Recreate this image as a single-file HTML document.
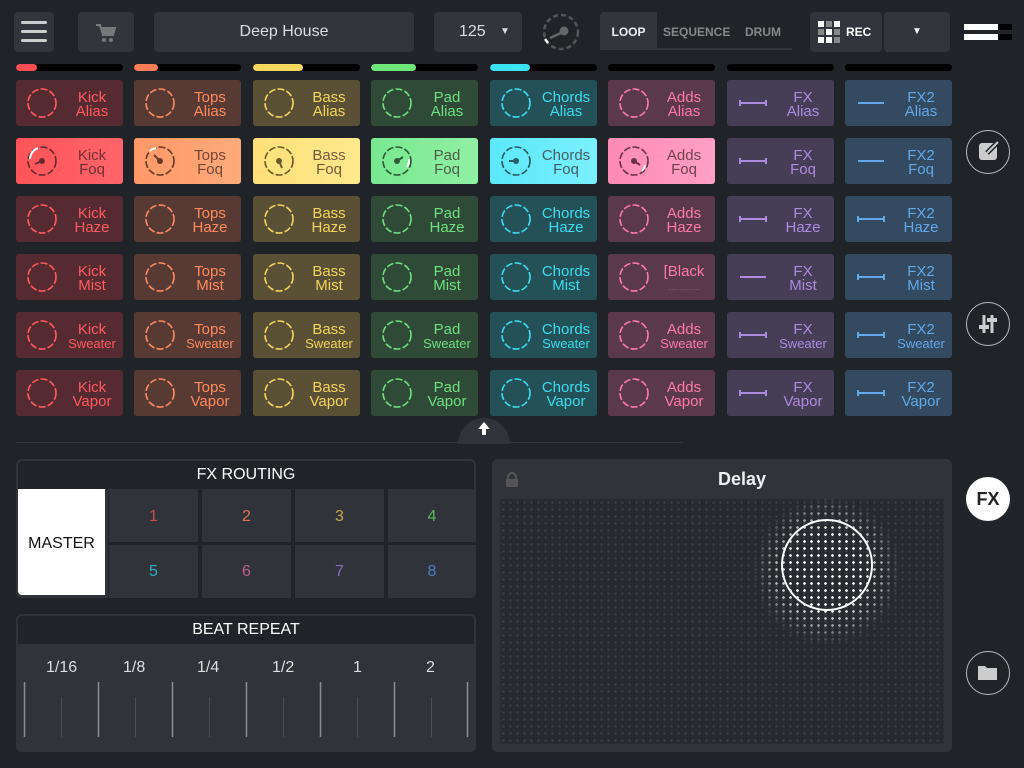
<!DOCTYPE html>
<html><head><meta charset="utf-8"><style>
*{box-sizing:border-box;margin:0;padding:0}
body{width:1024px;height:768px;background:#202327;font-family:"Liberation Sans",sans-serif;position:relative;overflow:hidden;color:#fff}
.a{position:absolute}
.btn{position:absolute;background:#32363c;border-radius:4px}
.p{position:absolute;width:107px;height:46px;border-radius:3px}
.p svg{position:absolute;left:10px;top:7px}
.t{position:absolute;left:44px;width:64px;top:11px;text-align:center;font-size:15px;line-height:14px}
.s{font-size:13px}
.bar{position:absolute;top:64px;height:7px;width:107px;background:#000;border-radius:4px;overflow:hidden}
.bar i{display:block;height:7px;border-radius:4px}
.c1 .t{color:#ff5a5f}.c1{background:#552a31}
.c2 .t{color:#ff8a5c}.c2{background:#573a33}
.c3 .t{color:#f5d45c}.c3{background:#5a5036}
.c4 .t{color:#6ee07e}.c4{background:#2f4a37}
.c5 .t{color:#3ddcee}.c5{background:#245058}
.c6 .t{color:#ff78a8}.c6{background:#5a3a4a}
.c7 .t{color:#ae8ae0}.c7{background:#463d56}
.c8 .t{color:#62a8ea}.c8{background:#334a60}
.f .t{color:rgba(50,30,30,.7)}
.cb{position:absolute;width:44px;height:44px;border-radius:50%;border:1.5px solid #bbb;left:966px}
</style></head><body>
<div class="btn" style="left:14px;top:12px;width:40px;height:40px"><div class="a" style="left:7px;top:9px;width:26px;height:3px;background:#ccc;border-radius:2px;box-shadow:0 9px 0 #ccc,0 18px 0 #ccc"></div></div>
<div class="btn" style="left:78px;top:12px;width:56px;height:40px"><svg class="a" style="left:16px;top:10px" width="24" height="22"><path d="M2 3h4l3 10h10l2-7H7" fill="#777" stroke="#777" stroke-width="2"/><circle cx="10" cy="18" r="2" fill="#777"/><circle cx="17" cy="18" r="2" fill="#777"/></svg></div>
<div class="btn" style="left:154px;top:12px;width:260px;height:40px;text-align:center;line-height:40px;font-size:16px;color:#ddd">Deep House</div>
<div class="btn" style="left:434px;top:12px;width:88px;height:40px;line-height:40px;font-size:16px;color:#ddd"><span class="a" style="left:25px">125</span><span class="a" style="left:66px;font-size:10px">▼</span></div>
<svg class="a" style="left:542px;top:13px" width="38" height="38"><circle cx="19" cy="19" r="17" fill="none" stroke="#555" stroke-width="2.5" stroke-dasharray="5 3"/><circle cx="22" cy="18" r="4.5" fill="#666"/><path d="M21 19L8 25" stroke="#666" stroke-width="2.5"/><path d="M3 26L6 30" stroke="#fff" stroke-width="2.5"/></svg>
<div class="a" style="left:600px;top:12px;width:192px;height:38px;border-bottom:2px solid #32363c"></div>
<div class="btn" style="left:600px;top:12px;width:57px;height:38px;border-radius:4px 0 0 0;font-size:12px;font-weight:bold;line-height:40px;text-align:center;color:#eee">LOOP</div>
<div class="a" style="left:663px;top:12px;line-height:40px;font-size:12px;font-weight:bold;color:#888">SEQUENCE</div>
<div class="a" style="left:745px;top:12px;line-height:40px;font-size:12px;font-weight:bold;color:#888">DRUM</div>
<div class="btn" style="left:810px;top:12px;width:72px;height:40px"><svg class="a" style="left:8px;top:9px" width="22" height="22"><g fill="#fff"><rect x="0" y="0" width="6" height="6"/><rect x="0" y="8" width="6" height="6" fill="#888"/><rect x="0" y="16" width="6" height="6"/><rect x="8" y="0" width="6" height="6" fill="#888"/><rect x="8" y="8" width="6" height="6"/><rect x="8" y="16" width="6" height="6"/><rect x="16" y="0" width="6" height="6"/><rect x="16" y="8" width="6" height="6" fill="#888"/><rect x="16" y="16" width="6" height="6" fill="#888"/></g></svg><span class="a" style="left:36px;top:0;line-height:40px;font-size:12px;font-weight:bold">REC</span></div>
<div class="btn" style="left:884px;top:12px;width:66px;height:40px;text-align:center;line-height:40px;font-size:10px">▼</div>
<div class="a" style="left:964px;top:24px;width:34px;height:6px;background:#fff"></div><div class="a" style="left:998px;top:24px;width:14px;height:6px;background:#000"></div>
<div class="a" style="left:964px;top:34px;width:34px;height:6px;background:#fff"></div><div class="a" style="left:998px;top:34px;width:14px;height:6px;background:#000"></div>
<div class="bar" style="left:16px"><i style="width:21px;background:#ff4d55"></i></div>
<div class="bar" style="left:134px"><i style="width:24px;background:#ff7e58"></i></div>
<div class="bar" style="left:253px"><i style="width:50px;background:#ffd85e"></i></div>
<div class="bar" style="left:371px"><i style="width:45px;background:#6ee67a"></i></div>
<div class="bar" style="left:490px"><i style="width:40px;background:#3ae3f5"></i></div>
<div class="bar" style="left:608px"></div><div class="bar" style="left:727px"></div><div class="bar" style="left:845px"></div>
<svg width="0" height="0" style="position:absolute"><defs>
<symbol id="cir" viewBox="0 0 32 32"><circle cx="16" cy="16" r="14" fill="none" stroke="currentColor" stroke-width="1.6" stroke-dasharray="7 2.2"/></symbol>
<symbol id="ln" viewBox="0 0 32 32"><path d="M3 16h26M3 13v6M29 13v6" stroke="currentColor" stroke-width="2" fill="none"/></symbol>
<symbol id="ln2" viewBox="0 0 32 32"><path d="M3 16h26" stroke="currentColor" stroke-width="2" fill="none"/></symbol>
</defs></svg>
<div class="p c1" style="left:16px;top:80px"><svg width="32" height="32" style="color:#ff5a5f"><use href="#cir"/></svg><div class="t">Kick<br>Alias</div></div>
<div class="p c2" style="left:134px;top:80px"><svg width="32" height="32" style="color:#ff8a5c"><use href="#cir"/></svg><div class="t">Tops<br>Alias</div></div>
<div class="p c3" style="left:253px;top:80px"><svg width="32" height="32" style="color:#f5d45c"><use href="#cir"/></svg><div class="t">Bass<br>Alias</div></div>
<div class="p c4" style="left:371px;top:80px"><svg width="32" height="32" style="color:#6ee07e"><use href="#cir"/></svg><div class="t">Pad<br>Alias</div></div>
<div class="p c5" style="left:490px;top:80px"><svg width="32" height="32" style="color:#3ddcee"><use href="#cir"/></svg><div class="t">Chords<br>Alias</div></div>
<div class="p c6" style="left:608px;top:80px"><svg width="32" height="32" style="color:#ff78a8"><use href="#cir"/></svg><div class="t">Adds<br>Alias</div></div>
<div class="p c7" style="left:727px;top:80px"><svg width="32" height="32" style="color:#ae8ae0"><use href="#ln"/></svg><div class="t">FX<br>Alias</div></div>
<div class="p c8" style="left:845px;top:80px"><svg width="32" height="32" style="color:#62a8ea"><use href="#ln2"/></svg><div class="t">FX2<br>Alias</div></div>

<div class="p c1 f" style="left:16px;top:138px;background:linear-gradient(90deg,#ff5459,#ff646a)"><svg width="32" height="32" style="color:#6a2a2e"><use href="#cir"/><circle cx="16" cy="16" r="3" fill="#6a2a2e"/><path d="M16 16L9 19" stroke="#6a2a2e" stroke-width="2"/><path d="M4 14A12 12 0 0 1 12 3" stroke="#fff" stroke-width="2" fill="none"/></svg><div class="t">Kick<br>Foq</div></div>
<div class="p c2 f" style="left:134px;top:138px;background:linear-gradient(90deg,#ff9868,#ffaa7a)"><svg width="32" height="32" style="color:#6a3a28"><use href="#cir"/><circle cx="16" cy="16" r="3" fill="#6a3a28"/><path d="M16 16L10 10" stroke="#6a3a28" stroke-width="2"/><path d="M6 6A12 12 0 0 1 12 3" stroke="#fff" stroke-width="2" fill="none"/></svg><div class="t">Tops<br>Foq</div></div>
<div class="p c3 f" style="left:253px;top:138px;background:linear-gradient(90deg,#ffe07a,#ffe88c)"><svg width="32" height="32" style="color:#6a5a2a"><use href="#cir"/><circle cx="16" cy="16" r="3" fill="#6a5a2a"/><path d="M16 16L19 23" stroke="#6a5a2a" stroke-width="2"/></svg><div class="t">Bass<br>Foq</div></div>
<div class="p c4 f" style="left:371px;top:138px;background:linear-gradient(90deg,#78e890,#90f0a4)"><svg width="32" height="32" style="color:#2e5a38"><use href="#cir"/><circle cx="16" cy="16" r="3" fill="#2e5a38"/><path d="M16 16L22 12" stroke="#2e5a38" stroke-width="2"/><path d="M28 14A12 12 0 0 1 26 22" stroke="#fff" stroke-width="2" fill="none"/></svg><div class="t">Pad<br>Foq</div></div>
<div class="p c5 f" style="left:490px;top:138px;background:linear-gradient(90deg,#5ae8f8,#7af0ff)"><svg width="32" height="32" style="color:#2a5a62"><use href="#cir"/><circle cx="16" cy="16" r="3" fill="#2a5a62"/><path d="M16 16L9 16" stroke="#2a5a62" stroke-width="2"/></svg><div class="t">Chords<br>Foq</div></div>
<div class="p c6 f" style="left:608px;top:138px;background:linear-gradient(90deg,#ff8ab4,#ffa0c4)"><svg width="32" height="32" style="color:#6a3448"><use href="#cir"/><circle cx="16" cy="16" r="3" fill="#6a3448"/><path d="M16 16L22 20" stroke="#6a3448" stroke-width="2"/><path d="M27 20A12 12 0 0 1 24 26" stroke="#fff" stroke-width="2" fill="none"/></svg><div class="t">Adds<br>Foq</div></div>
<div class="p c7" style="left:727px;top:138px"><svg width="32" height="32" style="color:#ae8ae0"><use href="#ln"/></svg><div class="t">FX<br>Foq</div></div>
<div class="p c8" style="left:845px;top:138px"><svg width="32" height="32" style="color:#62a8ea"><use href="#ln2"/></svg><div class="t">FX2<br>Foq</div></div>

<div class="p c1" style="left:16px;top:196px"><svg width="32" height="32" style="color:#ff5a5f"><use href="#cir"/></svg><div class="t">Kick<br>Haze</div></div>
<div class="p c2" style="left:134px;top:196px"><svg width="32" height="32" style="color:#ff8a5c"><use href="#cir"/></svg><div class="t">Tops<br>Haze</div></div>
<div class="p c3" style="left:253px;top:196px"><svg width="32" height="32" style="color:#f5d45c"><use href="#cir"/></svg><div class="t">Bass<br>Haze</div></div>
<div class="p c4" style="left:371px;top:196px"><svg width="32" height="32" style="color:#6ee07e"><use href="#cir"/></svg><div class="t">Pad<br>Haze</div></div>
<div class="p c5" style="left:490px;top:196px"><svg width="32" height="32" style="color:#3ddcee"><use href="#cir"/></svg><div class="t">Chords<br>Haze</div></div>
<div class="p c6" style="left:608px;top:196px"><svg width="32" height="32" style="color:#ff78a8"><use href="#cir"/></svg><div class="t">Adds<br>Haze</div></div>
<div class="p c7" style="left:727px;top:196px"><svg width="32" height="32" style="color:#ae8ae0"><use href="#ln"/></svg><div class="t">FX<br>Haze</div></div>
<div class="p c8" style="left:845px;top:196px"><svg width="32" height="32" style="color:#62a8ea"><use href="#ln"/></svg><div class="t">FX2<br>Haze</div></div>

<div class="p c1" style="left:16px;top:254px"><svg width="32" height="32" style="color:#ff5a5f"><use href="#cir"/></svg><div class="t">Kick<br>Mist</div></div>
<div class="p c2" style="left:134px;top:254px"><svg width="32" height="32" style="color:#ff8a5c"><use href="#cir"/></svg><div class="t">Tops<br>Mist</div></div>
<div class="p c3" style="left:253px;top:254px"><svg width="32" height="32" style="color:#f5d45c"><use href="#cir"/></svg><div class="t">Bass<br>Mist</div></div>
<div class="p c4" style="left:371px;top:254px"><svg width="32" height="32" style="color:#6ee07e"><use href="#cir"/></svg><div class="t">Pad<br>Mist</div></div>
<div class="p c5" style="left:490px;top:254px"><svg width="32" height="32" style="color:#3ddcee"><use href="#cir"/></svg><div class="t">Chords<br>Mist</div></div>
<div class="p c6" style="left:608px;top:254px"><svg width="32" height="32" style="color:#ff78a8"><use href="#cir"/></svg><div class="t">[Black<br><span style="font-size:3px;line-height:3px">--- ------ ------------- -------</span></div></div>
<div class="p c7" style="left:727px;top:254px"><svg width="32" height="32" style="color:#ae8ae0"><use href="#ln2"/></svg><div class="t">FX<br>Mist</div></div>
<div class="p c8" style="left:845px;top:254px"><svg width="32" height="32" style="color:#62a8ea"><use href="#ln"/></svg><div class="t">FX2<br>Mist</div></div>

<div class="p c1" style="left:16px;top:312px"><svg width="32" height="32" style="color:#ff5a5f"><use href="#cir"/></svg><div class="t">Kick<br><span class="s">Sweater</span></div></div>
<div class="p c2" style="left:134px;top:312px"><svg width="32" height="32" style="color:#ff8a5c"><use href="#cir"/></svg><div class="t">Tops<br><span class="s">Sweater</span></div></div>
<div class="p c3" style="left:253px;top:312px"><svg width="32" height="32" style="color:#f5d45c"><use href="#cir"/></svg><div class="t">Bass<br><span class="s">Sweater</span></div></div>
<div class="p c4" style="left:371px;top:312px"><svg width="32" height="32" style="color:#6ee07e"><use href="#cir"/></svg><div class="t">Pad<br><span class="s">Sweater</span></div></div>
<div class="p c5" style="left:490px;top:312px"><svg width="32" height="32" style="color:#3ddcee"><use href="#cir"/></svg><div class="t">Chords<br><span class="s">Sweater</span></div></div>
<div class="p c6" style="left:608px;top:312px"><svg width="32" height="32" style="color:#ff78a8"><use href="#cir"/></svg><div class="t">Adds<br><span class="s">Sweater</span></div></div>
<div class="p c7" style="left:727px;top:312px"><svg width="32" height="32" style="color:#ae8ae0"><use href="#ln"/></svg><div class="t">FX<br><span class="s">Sweater</span></div></div>
<div class="p c8" style="left:845px;top:312px"><svg width="32" height="32" style="color:#62a8ea"><use href="#ln"/></svg><div class="t">FX2<br><span class="s">Sweater</span></div></div>

<div class="p c1" style="left:16px;top:370px"><svg width="32" height="32" style="color:#ff5a5f"><use href="#cir"/></svg><div class="t">Kick<br>Vapor</div></div>
<div class="p c2" style="left:134px;top:370px"><svg width="32" height="32" style="color:#ff8a5c"><use href="#cir"/></svg><div class="t">Tops<br>Vapor</div></div>
<div class="p c3" style="left:253px;top:370px"><svg width="32" height="32" style="color:#f5d45c"><use href="#cir"/></svg><div class="t">Bass<br>Vapor</div></div>
<div class="p c4" style="left:371px;top:370px"><svg width="32" height="32" style="color:#6ee07e"><use href="#cir"/></svg><div class="t">Pad<br>Vapor</div></div>
<div class="p c5" style="left:490px;top:370px"><svg width="32" height="32" style="color:#3ddcee"><use href="#cir"/></svg><div class="t">Chords<br>Vapor</div></div>
<div class="p c6" style="left:608px;top:370px"><svg width="32" height="32" style="color:#ff78a8"><use href="#cir"/></svg><div class="t">Adds<br>Vapor</div></div>
<div class="p c7" style="left:727px;top:370px"><svg width="32" height="32" style="color:#ae8ae0"><use href="#ln"/></svg><div class="t">FX<br>Vapor</div></div>
<div class="p c8" style="left:845px;top:370px"><svg width="32" height="32" style="color:#62a8ea"><use href="#ln"/></svg><div class="t">FX2<br>Vapor</div></div>

<div class="cb" style="top:130px"><div class="a" style="left:12px;top:12px;width:18px;height:17px;background:#ccc;border-radius:3px"></div><svg class="a" style="left:16px;top:8px" width="20" height="20"><path d="M4 14L15 3" stroke="#202327" stroke-width="5"/><path d="M4 14L15 3" stroke="#ccc" stroke-width="2"/></svg></div>
<div class="cb" style="top:302px"><svg class="a" style="left:10px;top:9px" width="22" height="24"><g stroke="#ccc" stroke-width="3"><path d="M7 3v18M15 3v18"/></g><rect x="2" y="13" width="10" height="4" fill="#ccc"/><rect x="10" y="6" width="10" height="4" fill="#ccc"/></svg></div>
<div class="a" style="left:966px;top:477px;width:44px;height:44px;border-radius:50%;background:#fff;color:#222;font-size:18px;font-weight:bold;text-align:center;line-height:44px">FX</div>
<div class="cb" style="top:651px"><svg class="a" style="left:11px;top:12px" width="20" height="17"><path d="M0 2h7l2 2h10v12H0z" fill="#ccc"/></svg></div>

<div class="a" style="left:16px;top:442px;width:667px;height:1px;background:#33373c"></div>
<div class="a" style="left:458px;top:418px;width:52px;height:26px;border-radius:26px 26px 0 0;background:#30343a"></div>
<svg class="a" style="left:476px;top:421px" width="16" height="16"><path d="M8 1L2 8h4v6h4V8h4z" fill="#fff"/></svg>

<div class="a" style="left:16px;top:459px;width:460px;height:139px;background:#30343a;border-radius:6px;overflow:hidden">
<div class="a" style="left:2px;top:2px;width:456px;height:28px;background:#202327;border-radius:4px 4px 0 0;text-align:center;line-height:28px;font-size:16px">FX ROUTING</div>
<div class="a" style="left:2px;top:30px;width:87px;height:106px;background:#fff;color:#111;text-align:center;line-height:110px;font-size:16px;border-radius:0 0 0 4px">MASTER</div>
<div class="a" style="left:92px;top:30px;width:368px;height:109px;background:#202327"></div>
<div class="a" style="left:93px;top:30px;width:89px;height:53px;background:#30343a;color:#d04a4c;text-align:center;line-height:55px;font-size:16px">1</div>
<div class="a" style="left:186px;top:30px;width:89px;height:53px;background:#30343a;color:#e07050;text-align:center;line-height:55px;font-size:16px">2</div>
<div class="a" style="left:279px;top:30px;width:89px;height:53px;background:#30343a;color:#c8a848;text-align:center;line-height:55px;font-size:16px">3</div>
<div class="a" style="left:372px;top:30px;width:88px;height:53px;background:#30343a;color:#5ab85a;text-align:center;line-height:55px;font-size:16px">4</div>
<div class="a" style="left:93px;top:86px;width:89px;height:53px;background:#30343a;color:#30b0c8;text-align:center;line-height:53px;font-size:16px">5</div>
<div class="a" style="left:186px;top:86px;width:89px;height:53px;background:#30343a;color:#c05a8a;text-align:center;line-height:53px;font-size:16px">6</div>
<div class="a" style="left:279px;top:86px;width:89px;height:53px;background:#30343a;color:#8a6ac0;text-align:center;line-height:53px;font-size:16px">7</div>
<div class="a" style="left:372px;top:86px;width:88px;height:53px;background:#30343a;color:#4a80c8;text-align:center;line-height:53px;font-size:16px">8</div>
</div>

<div class="a" style="left:16px;top:614px;width:460px;height:138px;background:#30343a;border-radius:6px">
<div class="a" style="left:2px;top:2px;width:456px;height:28px;background:#202327;border-radius:4px 4px 0 0;text-align:center;line-height:28px;font-size:16px">BEAT REPEAT</div>
<div class="a" style="left:0;top:45px;width:460px;font-size:16px;color:#ddd">
<span class="a" style="left:30px">1/16</span><span class="a" style="left:107px">1/8</span><span class="a" style="left:181px">1/4</span><span class="a" style="left:256px">1/2</span><span class="a" style="left:337px">1</span><span class="a" style="left:410px">2</span></div>
<svg class="a" style="left:0;top:0" width="460" height="138"><g stroke="#8a8d92" stroke-width="1.5"><path d="M8.5 68v55M82.5 68v55M156.5 68v55M230.5 68v55M304.5 68v55M378.5 68v55M451.5 68v55"/></g><g stroke="#4a4e54" stroke-width="1"><path d="M45.5 83v40M119.5 83v40M193.5 83v40M267.5 83v40M341.5 83v40M415.5 83v40"/></g></svg>
</div>

<div class="a" style="left:492px;top:459px;width:460px;height:293px;background:#30343a;border-radius:6px">
<svg class="a" style="left:12px;top:13px" width="16" height="16"><path d="M4 7V5a4 4 0 0 1 8 0v2" stroke="#555" stroke-width="2" fill="none"/><rect x="2" y="7" width="12" height="8" fill="#555" rx="1"/></svg>
<div class="a" style="left:0;top:10px;width:500px;text-align:center;font-size:18px;font-weight:bold;color:#eee">Delay</div>
<div class="a" style="left:8px;top:40px;width:444px;height:245px;background-color:#272a2f;background-image:radial-gradient(circle,#3e4248 1px,transparent 1.3px);background-size:7px 7px;overflow:hidden">
<div class="a" style="left:252px;top:-3px;width:150px;height:150px;border-radius:50%;background-image:radial-gradient(circle,#fff 1.2px,transparent 1.5px);background-size:7px 7px;-webkit-mask-image:radial-gradient(circle,#000 35%,rgba(0,0,0,.5) 55%,transparent 70%);mask-image:radial-gradient(circle,#000 35%,rgba(0,0,0,.5) 55%,transparent 70%)"></div>
<div class="a" style="left:281px;top:20px;width:92px;height:92px;border-radius:50%;border:2px solid #fff"></div>
</div>
</div>
</body></html>
